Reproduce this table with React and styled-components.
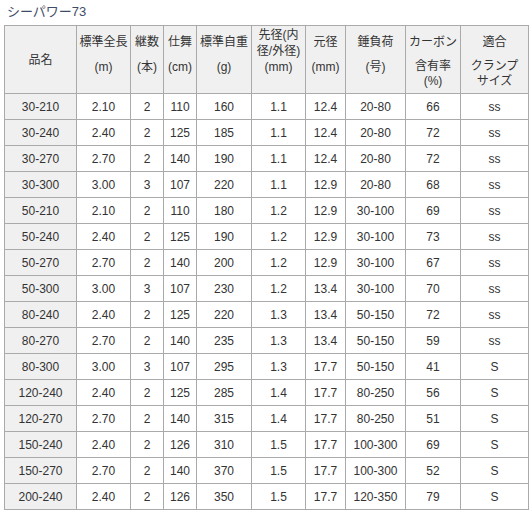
import React from "react";
import styled, { createGlobalStyle } from "styled-components";

const Global = createGlobalStyle`
  html, body { margin: 0; padding: 0; background: #fff; }
  body { font-family: "Liberation Sans", Arial, "Noto Sans CJK JP", sans-serif; color: #333; }
`;

const Page = styled.div`
  padding: 4px 4px 0 4px;
`;

const Title = styled.div`
  font-size: 13px;
  line-height: 16px;
  color: #3f4b68;
  padding-left: 3px;
  margin-bottom: 5px;
`;

const Table = styled.table`
  table-layout: fixed;
  border-collapse: separate;
  border-spacing: 0;
  width: 524px;
  border-left: 1px solid #aaa;
  border-top: 1px solid #aaa;
  font-size: 12px;
`;

const Col = styled.col`
  width: ${(p) => p.$w}px;
`;

const Head = styled.th`
  box-sizing: border-box;
  height: 68px;
  padding: ${(p) => p.$pt}px 0 0 0;
  vertical-align: top;
  text-align: center;
  font-weight: normal;
  background: #f0f0f0;
  border-right: 1px solid #aaa;
  border-bottom: 1px solid #aaa;
  white-space: nowrap;
`;

const Line = styled.div`
  line-height: ${(p) => p.$lh || 16}px;
  margin-top: ${(p) => p.$gap || 0}px;
`;

const Cell = styled.td`
  box-sizing: border-box;
  height: 26px;
  padding: 0;
  text-align: center;
  vertical-align: middle;
  background: ${(p) => (p.$first ? "#f0f0f0" : "#fff")};
  border-right: 1px solid #aaa;
  border-bottom: 1px solid #aaa;
  white-space: nowrap;
`;

const widths = [72, 54, 33, 33, 55, 54, 40, 60, 55, 68];

const headers = [
  { pt: 26, lines: [["品名"]] },
  { pt: 8, lines: [["標準全長"], ["(m)"]] },
  { pt: 8, lines: [["継数"], ["(本)"]] },
  { pt: 8, lines: [["仕舞"], ["(cm)"]] },
  { pt: 8, lines: [["標準自重"], ["(g)"]] },
  { pt: 1, lines: [["先径(内", "径/外径)", "(mm)"]] },
  { pt: 8, lines: [["元径"], ["(mm)"]] },
  { pt: 8, lines: [["錘負荷"], ["(号)"]] },
  { pt: 8, lines: [["カーボン"], ["含有率", "(%)"]] },
  { pt: 8, lines: [["適合"], ["クランプ", "サイズ"]] },
];

const rows = [
  ["30-210", "2.10", "2", "110", "160", "1.1", "12.4", "20-80", "66", "ss"],
  ["30-240", "2.40", "2", "125", "185", "1.1", "12.4", "20-80", "72", "ss"],
  ["30-270", "2.70", "2", "140", "190", "1.1", "12.4", "20-80", "72", "ss"],
  ["30-300", "3.00", "3", "107", "220", "1.1", "12.9", "20-80", "68", "ss"],
  ["50-210", "2.10", "2", "110", "180", "1.2", "12.9", "30-100", "69", "ss"],
  ["50-240", "2.40", "2", "125", "190", "1.2", "12.9", "30-100", "73", "ss"],
  ["50-270", "2.70", "2", "140", "200", "1.2", "12.9", "30-100", "67", "ss"],
  ["50-300", "3.00", "3", "107", "230", "1.2", "13.4", "30-100", "70", "ss"],
  ["80-240", "2.40", "2", "125", "220", "1.3", "13.4", "50-150", "72", "ss"],
  ["80-270", "2.70", "2", "140", "235", "1.3", "13.4", "50-150", "59", "ss"],
  ["80-300", "3.00", "3", "107", "295", "1.3", "17.7", "50-150", "41", "S"],
  ["120-240", "2.40", "2", "125", "285", "1.4", "17.7", "80-250", "56", "S"],
  ["120-270", "2.70", "2", "140", "315", "1.4", "17.7", "80-250", "51", "S"],
  ["150-240", "2.40", "2", "126", "310", "1.5", "17.7", "100-300", "69", "S"],
  ["150-270", "2.70", "2", "140", "370", "1.5", "17.7", "100-300", "52", "S"],
  ["200-240", "2.40", "2", "126", "350", "1.5", "17.7", "120-350", "79", "S"],
];

export default function App() {
  return (
    <Page>
      <Global />
      <Title>シーパワー73</Title>
      <Table>
        <colgroup>
          {widths.map((w, i) => (
            <Col key={i} $w={w} />
          ))}
        </colgroup>
        <thead>
          <tr>
            {headers.map((h, i) => (
              <Head key={i} $pt={h.pt}>
                {h.lines.map((block, bi) =>
                  block.map((t, ti) => (
                    <Line
                      key={bi + "-" + ti}
                      $gap={bi > 0 && ti === 0 ? 9 : 0}
                      $lh={bi > 0 && block.length > 1 ? 15 : 16}
                    >
                      {t}
                    </Line>
                  ))
                )}
              </Head>
            ))}
          </tr>
        </thead>
        <tbody>
          {rows.map((r, ri) => (
            <tr key={ri}>
              {r.map((c, ci) => (
                <Cell key={ci} $first={ci === 0}>
                  {c}
                </Cell>
              ))}
            </tr>
          ))}
        </tbody>
      </Table>
    </Page>
  );
}
